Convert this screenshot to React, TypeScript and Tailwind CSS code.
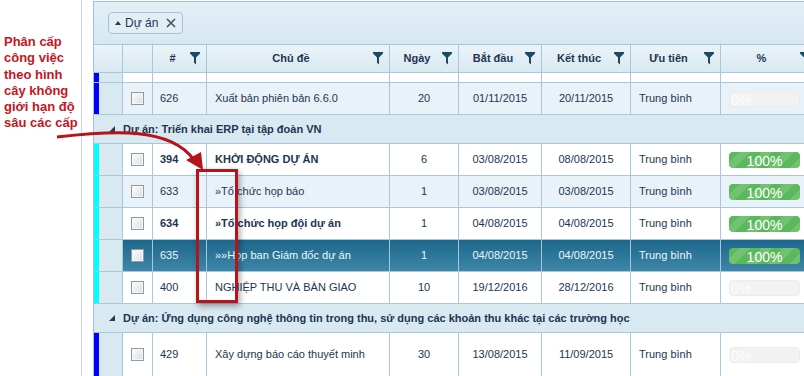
import React from "react";

type Task = {
  id: string;
  title: string;
  days: string;
  start: string;
  end: string;
  pct: number;
  bold?: boolean;
  alt?: boolean;
  selected?: boolean;
  bar: string;
  tall?: boolean;
};

const W = ["w-[29px]", "w-[30px]", "w-[54px]", "w-[183px]", "w-[69px]", "w-[83px]", "w-[89px]", "w-[90px]", "w-[96px]"];

function Filter() {
  return (
    <svg width="10" height="13" viewBox="0 0 10 13" className="shrink-0 mr-[6px]">
      <path d="M0 0 H10 V1.5 L6 5.5 V12.5 L4 10.8 V5.5 L0 1.5 Z" fill="#1b4b62" />
    </svg>
  );
}

function Checkbox() {
  return (
    <div className="w-[13px] h-[13px] border border-[#8f9aa3] bg-[linear-gradient(135deg,#ffffff,#d9dde0)] shadow-[inset_0_0_0_1px_#f4f6f7]" />
  );
}

function Progress({ pct }: { pct: number }) {
  if (pct === 100) {
    return (
      <div className="w-[71px] h-[16px] rounded-[4px] bg-[#5cb85c] bg-[linear-gradient(135deg,#5cb85c_25%,#71c271_25%,#71c271_50%,#5cb85c_50%,#5cb85c_75%,#71c271_75%)] bg-[length:22px_22px] text-white text-[14px] leading-[16px] text-center pt-[1px]">
        100%
      </div>
    );
  }
  return (
    <div className="w-[71px] h-[16px] rounded-[4px] bg-[#f2f2f2] border border-[#ececec] text-[#fdfdfd] text-[14px] leading-[16px] pl-[1px]">
      0%
    </div>
  );
}

function Row({ t }: { t: Task }) {
  const bg = t.selected
    ? "bg-[linear-gradient(#1c678c,#3f87a8)] text-[#eef5f9]"
    : t.alt
    ? "bg-[#e9f2f8] text-[#1d3553]"
    : "bg-white text-[#1d3553]";
  const cell = "h-full flex items-center border-r border-[#a7c8da]";
  return (
    <div className={`flex ${t.tall ? "h-[44px]" : "h-[32px]"} border-b border-[#a7c8da]`}>
      <div className={`${W[0]} h-full bg-[#d8e9f2] border-r border-[#a7c8da] shrink-0`}>
        <div className={`w-[5px] h-full ${t.bar}`} />
      </div>
      <div className={`flex ${bg} ${t.bold ? "font-bold" : ""}`}>
        <div className={`${W[1]} ${cell} justify-center`}>
          <Checkbox />
        </div>
        <div className={`${W[2]} ${cell} pl-[7px]`}>{t.id}</div>
        <div className={`${W[3]} ${cell} pl-[8px] whitespace-nowrap`}>{t.title}</div>
        <div className={`${W[4]} ${cell} justify-center font-normal`}>{t.days}</div>
        <div className={`${W[5]} ${cell} justify-center font-normal`}>{t.start}</div>
        <div className={`${W[6]} ${cell} justify-center font-normal`}>{t.end}</div>
        <div className={`${W[7]} ${cell} pl-[8px] font-normal`}>Trung bình</div>
        <div className={`${W[8]} ${cell} pl-[8px] font-normal`}>
          <Progress pct={t.pct} />
        </div>
      </div>
    </div>
  );
}

function Group({ label }: { label: string }) {
  return (
    <div className="flex items-center h-[29px] bg-[#d8e9f2] border-b border-[#a7c8da] pl-[15px] font-bold text-[#1d3553] whitespace-nowrap">
      <svg width="6" height="6" viewBox="0 0 6 6" className="mr-[8px]">
        <polygon points="6,0 6,6 0,6" fill="#2b3a48" />
      </svg>
      {label}
    </div>
  );
}

const erp: Task[] = [
  { id: "394", title: "KHỞI ĐỘNG DỰ ÁN", days: "6", start: "03/08/2015", end: "08/08/2015", pct: 100, bold: true, bar: "bg-[#00ffff]" },
  { id: "633", title: "»Tổ chức họp báo", days: "1", start: "03/08/2015", end: "03/08/2015", pct: 100, alt: true, bar: "bg-[#00ffff]" },
  { id: "634", title: "»Tổ chức họp đội dự án", days: "1", start: "04/08/2015", end: "04/08/2015", pct: 100, bold: true, bar: "bg-[#00ffff]" },
  { id: "635", title: "»»Họp ban Giám đốc dự án", days: "1", start: "04/08/2015", end: "04/08/2015", pct: 100, selected: true, bar: "bg-[#00ffff]" },
  { id: "400", title: "NGHIỆP THU VÀ BÀN GIAO", days: "10", start: "19/12/2016", end: "28/12/2016", pct: 0, bar: "bg-[#00ffff]" },
];

const headers = ["#", "Chủ đề", "Ngày", "Bắt đầu", "Kết thúc", "Ưu tiên", "%"];

export default function App() {
  return (
    <div className="relative w-[804px] h-[376px] overflow-hidden bg-white font-['Liberation_Sans',Arial,sans-serif] text-[11px]">
      <div className="flex h-full">
        <div className="w-[82px] shrink-0 h-full border-r border-[#c5d9e5] pl-[4px] pt-[34px] text-[13px] leading-[16.3px] font-bold text-[#c8141c]">
          Phân cấp
          <br />
          công việc
          <br />
          theo hình
          <br />
          cây không
          <br />
          giới hạn độ
          <br />
          sâu các cấp
        </div>
        <div className="w-[11px] shrink-0" />
        <div className="w-[760px] shrink-0 h-[376px] border-l border-t border-[#9ec3d7] mt-[1px] bg-[#dcebf4]">
          <div className="h-[42px] flex items-center pl-[14px] bg-[linear-gradient(#e3eff6,#d8e8f2)]">
            <div className="flex items-center h-[22px] px-[6px] rounded-[4px] border border-[#9fc4d8] bg-[#e2eef5] text-[#1d3553] text-[12px]">
              <svg width="6" height="4" viewBox="0 0 6 4" className="mr-[4px]">
                <polygon points="3,0 6,4 0,4" fill="#2b3a48" />
              </svg>
              Dự án
              <svg width="10" height="10" viewBox="0 0 10 10" className="ml-[8px]">
                <path d="M1 1 L9 9 M9 1 L1 9" stroke="#44505a" strokeWidth="1.6" />
              </svg>
            </div>
          </div>
          <div className="flex h-[29px] border-t border-b border-[#a7c8da] bg-[linear-gradient(#eaf3f8,#d9e9f2)] font-bold text-[#1d3553]">
            <div className={`${W[0]} border-r border-[#a7c8da]`} />
            <div className={`${W[1]} border-r border-[#a7c8da]`} />
            {headers.map((h, i) => (
              <div key={h} className={`${W[i + 2]} flex items-center border-r border-[#a7c8da]`}>
                <span className="flex-1 text-center pl-[2px]">{h}</span>
                <Filter />
              </div>
            ))}
          </div>
          <div className="flex h-[10px] border-b border-[#a7c8da]">
            <div className={`${W[0]} h-full bg-[#d8e9f2] border-r border-[#a7c8da]`}>
              <div className="w-[5px] h-full bg-[#0000ff]" />
            </div>
            {W.slice(1).map((w, i) => (
              <div key={i} className={`${w} h-full bg-white border-r border-[#a7c8da]`} />
            ))}
          </div>
          <Row t={{ id: "626", title: "Xuất bản phiên bản 6.6.0", days: "20", start: "01/11/2015", end: "20/11/2015", pct: 0, alt: true, bar: "bg-[#0000ff]" }} />
          <Group label="Dự án: Triển khai ERP tại tập đoàn VN" />
          {erp.map((t) => (
            <Row key={t.id} t={t} />
          ))}
          <Group label="Dự án: Ứng dụng công nghệ thông tin trong thu, sử dụng các khoản thu khác tại các trường học" />
          <Row t={{ id: "429", title: "Xây dựng báo cáo thuyết minh", days: "30", start: "13/08/2015", end: "11/09/2015", pct: 0, tall: true, bar: "bg-[#0000ff]" }} />
        </div>
      </div>

      <div className="absolute left-[196px] top-[169px] w-[42px] h-[134px] border-[3px] border-[#b8121a] shadow-[2px_3px_6px_rgba(0,0,0,0.35)]" />
      <svg className="absolute left-0 top-0 pointer-events-none" width="804" height="376">
        <path d="M57 137 C 110 131, 170 126, 194 160" fill="none" stroke="#b8121a" strokeWidth="3" />
        <polygon points="186,160 203,170 201,152" fill="#b8121a" />
      </svg>
    </div>
  );
}
